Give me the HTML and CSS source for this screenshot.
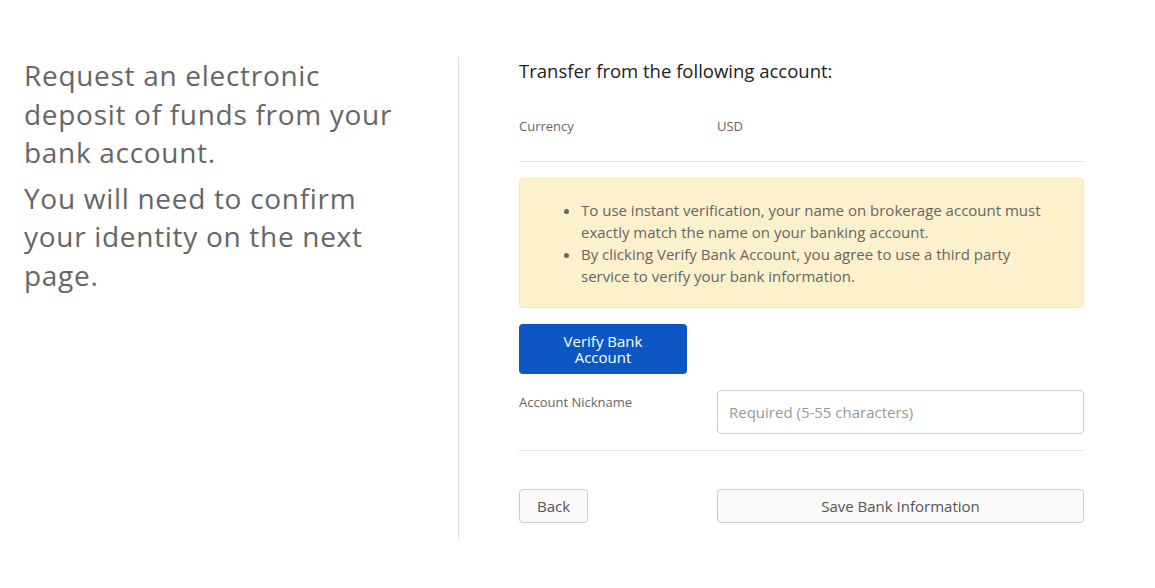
FILE: index.html
```html
<!DOCTYPE html>
<html>
<head>
<meta charset="utf-8">
<link rel="stylesheet" href="styles.css">
</head>
<body>
<div class="page">
  <div class="intro">
    <p class="intro-text">Request an electronic deposit of funds from your bank account.</p>
    <p class="intro-text intro-text-narrow">You will need to confirm your identity on the next page.</p>
  </div>
  <div class="form">
    <h2 class="form-title">Transfer from the following account:</h2>
    <div class="row info-row">
      <div class="label">Currency</div>
      <div class="value">USD</div>
    </div>
    <hr class="sep">
    <div class="alert">
      <ul>
        <li>To use instant verification, your name on brokerage account must exactly match the name on your banking account.</li>
        <li>By clicking Verify Bank Account, you agree to use a third party service to verify your bank information.</li>
      </ul>
    </div>
    <button class="btn-primary"><span class="btn-line">Verify Bank</span><span class="btn-line">Account</span></button>
    <div class="row field-row">
      <label class="label">Account Nickname</label>
      <input class="input" type="text" placeholder="Required (5-55 characters)">
    </div>
    <hr class="sep sep-bottom">
    <div class="row actions">
      <button class="btn btn-back">Back</button>
      <button class="btn btn-save">Save Bank Information</button>
    </div>
  </div>
</div>
</body>
</html>
```
FILE: styles.css
```css
* { box-sizing: border-box; }
body {
  margin: 0;
  background: #fff;
  font-family: "Open Sans", Lato, Arial, sans-serif;
  color: #666;
}
.page {
  display: flex;
  margin-top: 57px;
}
.intro {
  width: 459px;
  padding-left: 24px;
  border-right: 1px solid #ddd;
  height: 481px;
}
.intro-text {
  max-width: 385px;
  margin: 0 0 7px;
  font-size: 28px;
  letter-spacing: 0.7px;
  line-height: 38.5px;
  color: #666;
}
.intro-text:first-child {
  margin-top: -1px;
}
.intro-text-narrow {
  max-width: 348px;
}
.form {
  width: 625px;
  padding-left: 60px;
}
.form-title {
  margin: 2px 0 0;
  font-size: 18.5px;
  font-weight: 400;
  color: #222;
  line-height: 24px;
}
.row {
  display: flex;
}
.label {
  width: 198px;
  font-size: 13px;
  color: #666;
}
.value {
  font-size: 13px;
  color: #666;
}
.info-row {
  margin-top: 34px;
  line-height: 18px;
}
.sep {
  border: 0;
  border-top: 1px solid #e5e5e5;
  margin: 26px 0 16px;
}
.alert {
  background: #fdf1cb;
  border: 1px solid #f8e9b3;
  border-radius: 4px;
  padding: 20px 30px 20px 0;
}
.alert ul {
  margin: 0;
  padding-left: 61px;
  font-size: 15px;
  line-height: 22px;
  color: #666;
}
.btn-primary {
  display: flex;
  flex-direction: column;
  justify-content: center;
  align-items: center;
  margin-top: 16px;
  width: 168px;
  height: 50px;
  background: #0c57c3;
  color: #fff;
  border: 0;
  border-radius: 4px;
  font-family: inherit;
  font-size: 15px;
  padding: 0;
}
.btn-line {
  display: block;
  height: 16px;
  line-height: 16px;
}
.field-row {
  margin-top: 16px;
  align-items: flex-start;
}
.field-row .label {
  padding-top: 3px;
}
.input {
  width: 367px;
  height: 44px;
  border: 1px solid #ccc;
  border-radius: 4px;
  padding: 0 11px;
  font-family: inherit;
  font-size: 15px;
  color: #444;
}
.input::placeholder { color: #999; }
.sep-bottom {
  margin: 16px 0 38px;
}
.btn {
  height: 34px;
  background: #fafafa;
  border: 1px solid #ccc;
  border-radius: 4px;
  font-family: inherit;
  font-size: 15px;
  color: #555;
  padding: 0;
}
.btn-back {
  width: 69px;
  margin-right: 129px;
}
.btn-save {
  width: 367px;
}
```
